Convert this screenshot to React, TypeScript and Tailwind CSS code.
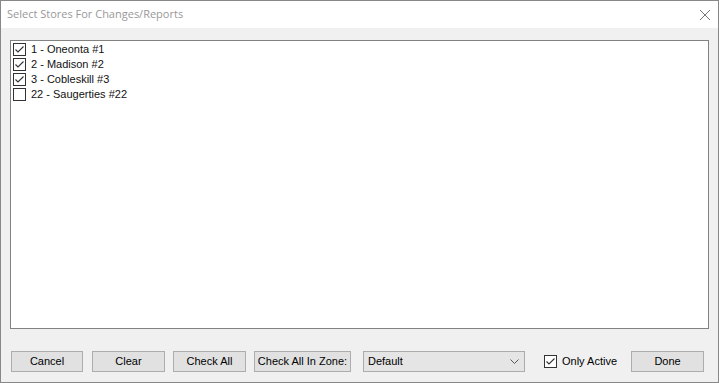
import React from "react";

const Check = () => (
  <svg width="13" height="13" viewBox="0 0 13 13" className="block shrink-0">
    <rect x="0.5" y="0.5" width="12" height="12" fill="#ffffff" stroke="#333333" />
    <path d="M2.5 6.5 L5 9 L10.5 3.5" fill="none" stroke="#333333" strokeWidth="1.1" />
  </svg>
);

const Empty = () => (
  <svg width="13" height="13" viewBox="0 0 13 13" className="block shrink-0">
    <rect x="0.5" y="0.5" width="12" height="12" fill="#ffffff" stroke="#333333" />
  </svg>
);

const items = [
  { label: "1 - Oneonta #1", checked: true },
  { label: "2 - Madison #2", checked: true },
  { label: "3 - Cobleskill #3", checked: true },
  { label: "22 - Saugerties #22", checked: false },
];

const Btn = ({ children, w }: { children: React.ReactNode; w: string }) => (
  <div
    className={`${w} shrink-0 h-[21px] border border-[#adadad] bg-[#e1e1e1] flex items-center justify-center text-[11px] text-black whitespace-nowrap`}
  >
    {children}
  </div>
);

export default function App() {
  return (
    <div
      className="w-[719px] h-[383px] bg-[#f0f0f0] border border-[#888888] flex flex-col"
      style={{ fontFamily: '"Liberation Sans", Arial, sans-serif' }}
    >
      <div className="h-[27px] bg-white flex items-center justify-between pl-[6px] pr-[6px] shrink-0">
        <span className="text-[11px] text-[#999999]" style={{ fontFamily: '"Open Sans", "Noto Sans", sans-serif' }}>
          Select Stores For Changes/Reports
        </span>
        <svg width="12" height="12" viewBox="0 0 12 12" className="mr-[1px]">
          <path d="M1 1 L11 11 M11 1 L1 11" stroke="#666666" strokeWidth="0.9" fill="none" />
        </svg>
      </div>
      <div className="flex-1 flex flex-col px-[9px] pt-[12px]">
        <div className="h-[289px] bg-white border border-[#828282] pl-[2px] pt-[1px]">
          {items.map((it) => (
            <div key={it.label} className="h-[15px] flex items-center gap-[5px] text-[11px] text-[#111111]">
              {it.checked ? <Check /> : <Empty />}
              <span>{it.label}</span>
            </div>
          ))}
        </div>
        <div className="flex items-center mt-[22px] pl-[1px]">
          <Btn w="w-[72px]">Cancel</Btn>
          <div className="w-[9px] shrink-0" />
          <Btn w="w-[73px]">Clear</Btn>
          <div className="w-[8px] shrink-0" />
          <Btn w="w-[73px]">Check All</Btn>
          <div className="w-[8px] shrink-0" />
          <Btn w="w-[97px]">Check All In Zone:</Btn>
          <div className="w-[12px] shrink-0" />
          <div className="w-[162px] shrink-0 h-[21px] border border-[#acacac] bg-[#e5e5e5] flex items-center justify-between pl-[4px] pr-[5px] text-[11px] text-black">
            <span>Default</span>
            <svg width="9" height="6" viewBox="0 0 9 6">
              <path d="M0.5 0.5 L4.5 4.5 L8.5 0.5" fill="none" stroke="#555555" strokeWidth="1" />
            </svg>
          </div>
          <div className="w-[19px] shrink-0" />
          <Check />
          <span className="ml-[5px] text-[11px] text-black whitespace-nowrap">Only Active</span>
          <div className="w-[14px] shrink-0" />
          <Btn w="w-[73px]">Done</Btn>
        </div>
      </div>
    </div>
  );
}
